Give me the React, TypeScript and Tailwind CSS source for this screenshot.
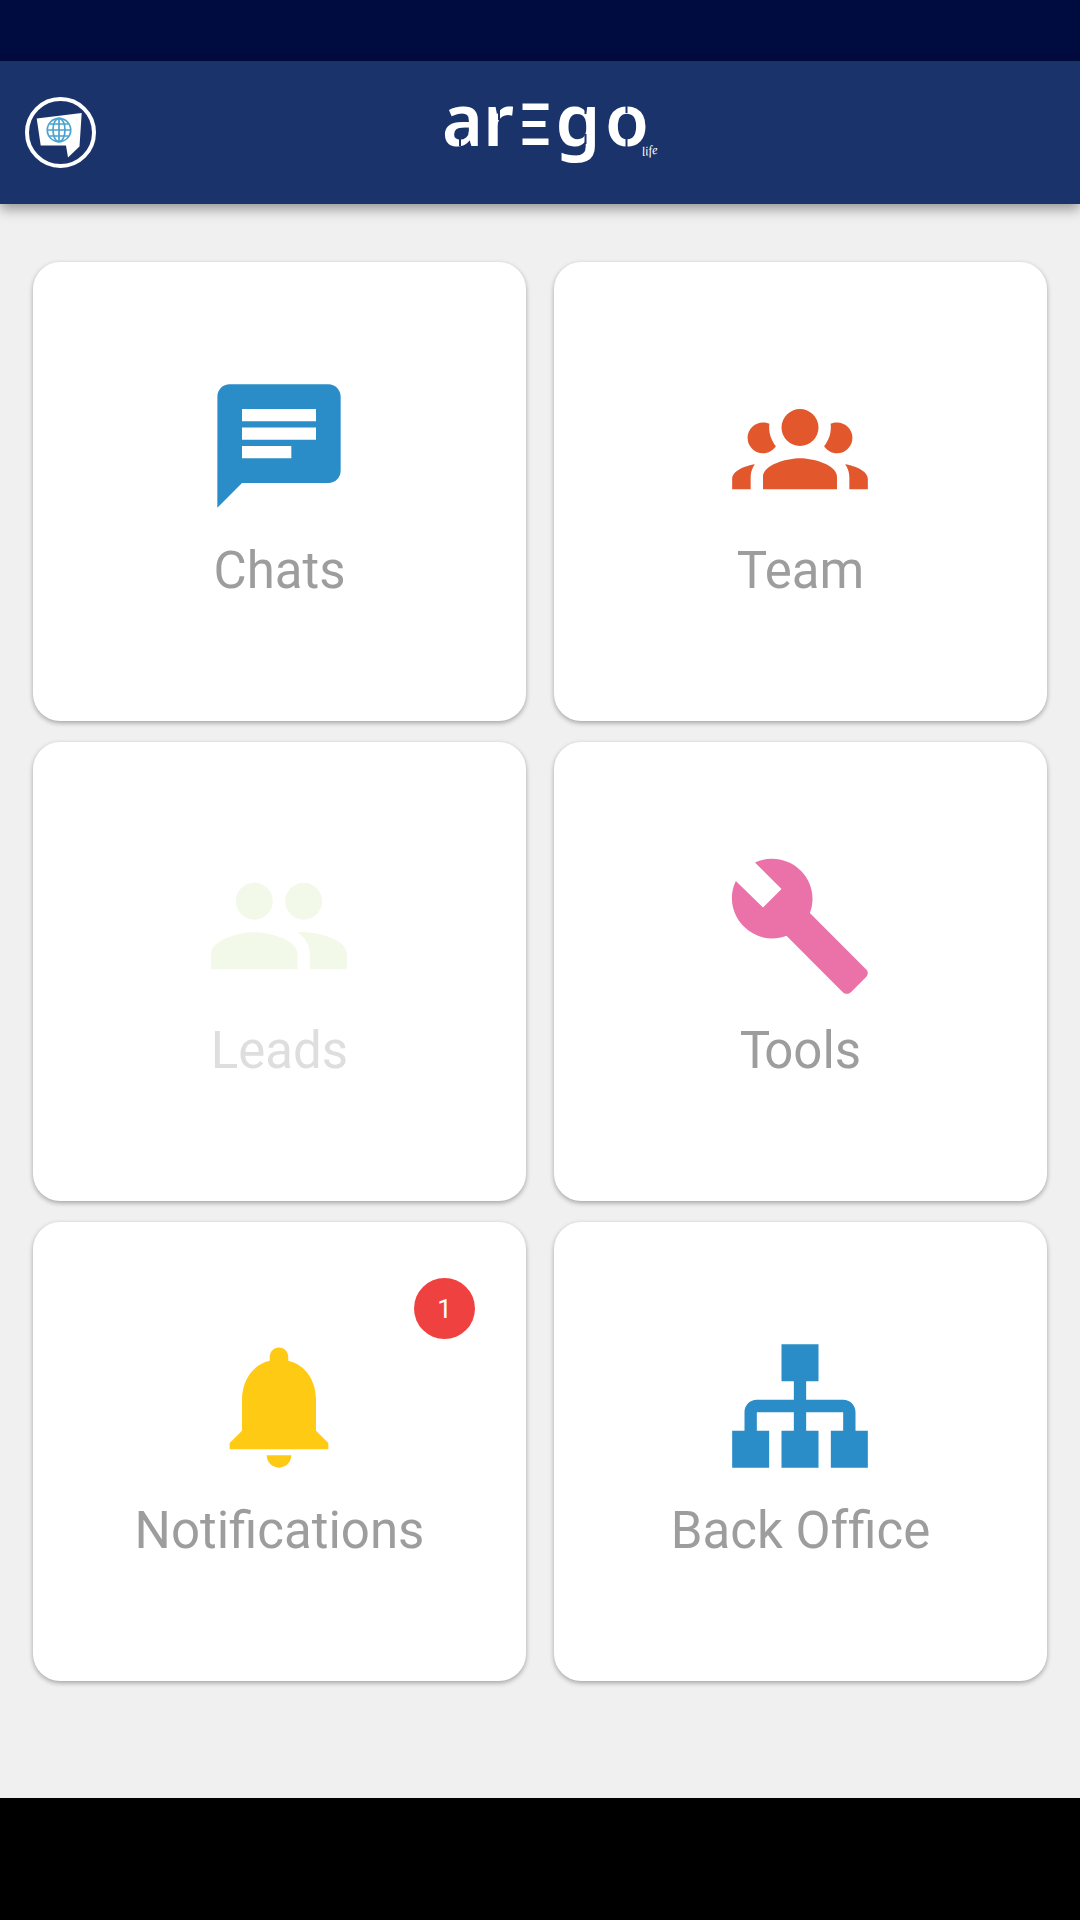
import type { ReactNode } from "react";

type Tile = {
  id: string;
  label: ReactNode;
  color: string;
  path: string;
  disabled?: boolean;
  badge?: number;
};

const tiles: Tile[] = [
  {
    id: "chats",
    label: "Chats",
    color: "text-[#2a8dc8]",
    path: "M20 2H4c-1.1 0-1.99.9-1.99 2L2 22l4-4h14c1.1 0 2-.9 2-2V4c0-1.1-.9-2-2-2zM6 9h12v2H6V9zm8 5H6v-2h8v2zm4-6H6V6h12v2z",
  },
  {
    id: "team",
    label: "Team",
    color: "text-[#e3572d]",
    path: "M12,6A3,3 0 0,0 9,9A3,3 0 0,0 12,12A3,3 0 0,0 15,9A3,3 0 0,0 12,6M6,8.17A2.5,2.5 0 0,0 3.5,10.67A2.5,2.5 0 0,0 6,13.17C6.88,13.17 7.65,12.71 8.09,12.03C7.42,11.18 7,10.15 7,9C7,8.8 7,8.6 7.04,8.4C6.72,8.25 6.37,8.17 6,8.17M18,8.17C17.63,8.17 17.28,8.25 16.96,8.4C17,8.6 17,8.8 17,9C17,10.15 16.58,11.18 15.91,12.03C16.35,12.71 17.12,13.17 18,13.17A2.5,2.5 0 0,0 20.5,10.67A2.5,2.5 0 0,0 18,8.17M12,14C10,14 6,15 6,17V19H18V17C18,15 14,14 12,14M4.67,14.97C3,15.26 1,16.04 1,17.33V19H4V17C4,16.22 4.29,15.53 4.67,14.97M19.33,14.97C19.71,15.53 20,16.22 20,17V19H23V17.33C23,16.04 21,15.26 19.33,14.97Z",
  },
  {
    id: "leads",
    label: "Leads",
    color: "text-[#f2f9e8]",
    disabled: true,
    path: "M16 11c1.66 0 2.99-1.34 2.99-3S17.66 5 16 5c-1.66 0-3 1.34-3 3s1.34 3 3 3zm-8 0c1.66 0 2.99-1.34 2.99-3S9.66 5 8 5C6.34 5 5 6.34 5 8s1.34 3 3 3zm0 2c-2.33 0-7 1.17-7 3.5V19h14v-2.5c0-2.33-4.67-3.5-7-3.5zm8 0c-.29 0-.62.02-.97.05 1.16.84 1.97 1.97 1.97 3.45V19h6v-2.5c0-2.33-4.67-3.5-7-3.5z",
  },
  {
    id: "tools",
    label: (
      <>
        <span className="tracking-[-6px]">T</span>ools
      </>
    ),
    color: "text-[#ea72a9]",
    path: "M22.7,19L13.6,9.9C14.5,7.6 14,4.9 12.1,3C10.1,1 7.1,0.6 4.7,1.7L9,6L6,9L1.6,4.7C0.4,7.1 0.9,10.1 2.9,12.1C4.8,14 7.5,14.5 9.8,13.6L18.9,22.7C19.3,23.1 19.9,23.1 20.3,22.7L22.6,20.4C23.1,20 23.1,19.3 22.7,19Z",
  },
  {
    id: "notifications",
    label: "Notifications",
    color: "text-[#ffca14]",
    badge: 1,
    path: "M12 22c1.1 0 2-.9 2-2h-4c0 1.1.89 2 2 2zm6-6v-5c0-3.07-1.64-5.64-4.5-6.32V4c0-.83-.67-1.5-1.5-1.5s-1.5.67-1.5 1.5v.68C7.63 5.36 6 7.92 6 11v5l-2 2v1h16v-1l-2-2z",
  },
  {
    id: "back-office",
    // the split keeps the first "f" out of the ligature
    label: (
      <>
        Back <span className="inline-block">Of</span>fice
      </>
    ),
    color: "text-[#2a8dc8]",
    path: "M9,2V8H11V11H5C3.89,11 3,11.89 3,13V16H1V22H7V16H5V13H11V16H9V22H15V16H13V13H19V16H17V22H23V16H21V13C21,11.89 20.11,11 19,11H13V8H15V2H9Z",
  },
];

function LogoLetter({
  x,
  width,
  children,
}: {
  x: number;
  width: number;
  children: ReactNode;
}) {
  return (
    <text x={x} y="50.5" textLength={width} lengthAdjust="spacingAndGlyphs">
      {children}
    </text>
  );
}

function Logo() {
  return (
    <svg
      aria-label="arego life"
      className="h-[70px] w-[230px] overflow-visible font-['Noto_Sans'] text-[73px] font-semibold"
      fill="white"
      viewBox="0 0 230 70"
    >
      <LogoLetter x={2} width={41}>a</LogoLetter>
      <LogoLetter x={43} width={31}>r</LogoLetter>
      <path d="M82.5 8.5h26V15h-26zM82.5 26h23v6h-23zM82.5 43.5h26V50h-26z" />
      <LogoLetter x={115.5} width={45}>g</LogoLetter>
      <LogoLetter x={165} width={44}>o</LogoLetter>
      {/* stencil cuts */}
      <path
        d="M186.5 5v13M186.5 40v13M59 5v20M145.5 7v12M145.5 39v10M20 42v9"
        stroke="#1b336b"
        strokeWidth="2"
      />
      <text
        className="font-['Liberation_Serif'] text-[13px] font-normal italic"
        lengthAdjust="spacingAndGlyphs"
        textLength="16"
        transform="rotate(-8 202 60)"
        x="202"
        y="61"
      >
        life
      </text>
    </svg>
  );
}

function ProfileButton() {
  return (
    <button
      aria-label="Profile"
      className="flex size-[71px] items-center justify-center rounded-full border-[4px] border-white"
    >
      <svg className="size-[63px]" fill="none" viewBox="0 0 63 63">
        <path
          d="M7.7 17.5 52.7 12 50.5 45.5 39 56.5 37 44.5H11.7z"
          fill="white"
        />
        <g stroke="#4aa3cf" strokeWidth="1.7">
          <circle cx="30" cy="29" r="11.7" />
          <ellipse cx="30" cy="29" rx="6" ry="11.7" />
          <path d="M30 17.3v23.4M18.3 29h23.4M20.5 23h19M20.5 35h19" />
        </g>
      </svg>
    </button>
  );
}

function TileCard({ tile }: { tile: Tile }) {
  return (
    <div className="relative flex flex-col items-center rounded-[27px] bg-white pt-[110.4px] shadow-[0_2px_5px_rgba(0,0,0,0.32)]">
      <svg
        aria-hidden="true"
        className={`mr-[1.5px] size-[148px] ${tile.color}`}
        fill="currentColor"
        viewBox="0 0 24 24"
      >
        <path d={tile.path} />
      </svg>
      <div
        className={`mt-[20.6px] text-[51px] leading-[60px] ${
          tile.disabled ? "text-[#dedede]" : "text-[#9d9d9d]"
        }`}
      >
        {tile.label}
      </div>
      {tile.badge && (
        <span className="absolute top-[56px] right-[51px] flex size-[61px] items-center justify-center rounded-full bg-[#f04141] pt-[2px] text-[26px] text-white">
          {tile.badge}
        </span>
      )}
    </div>
  );
}

export default function App() {
  return (
    <div className="flex h-[1920px] w-[1080px] flex-col bg-[#f0f0f0] font-['Roboto',sans-serif]">
      <div className="h-[61px] bg-[#000b3f]" />
      <header className="grid h-[143px] grid-cols-[1fr_230px_1fr] bg-[#1b336b] shadow-[0_5px_12px_rgba(0,0,0,0.38)]">
        <div className="pt-[36px] pl-[25px]">
          <ProfileButton />
        </div>
        <div className="pt-[34px] pl-[15px]">
          <Logo />
        </div>
      </header>
      <main className="grid flex-1 auto-rows-[459px] grid-cols-2 content-start gap-x-[28px] gap-y-[21px] px-[33px] pt-[58px]">
        {tiles.map((tile) => (
          <TileCard key={tile.id} tile={tile} />
        ))}
      </main>
      <div className="h-[122px] bg-black" />
    </div>
  );
}
